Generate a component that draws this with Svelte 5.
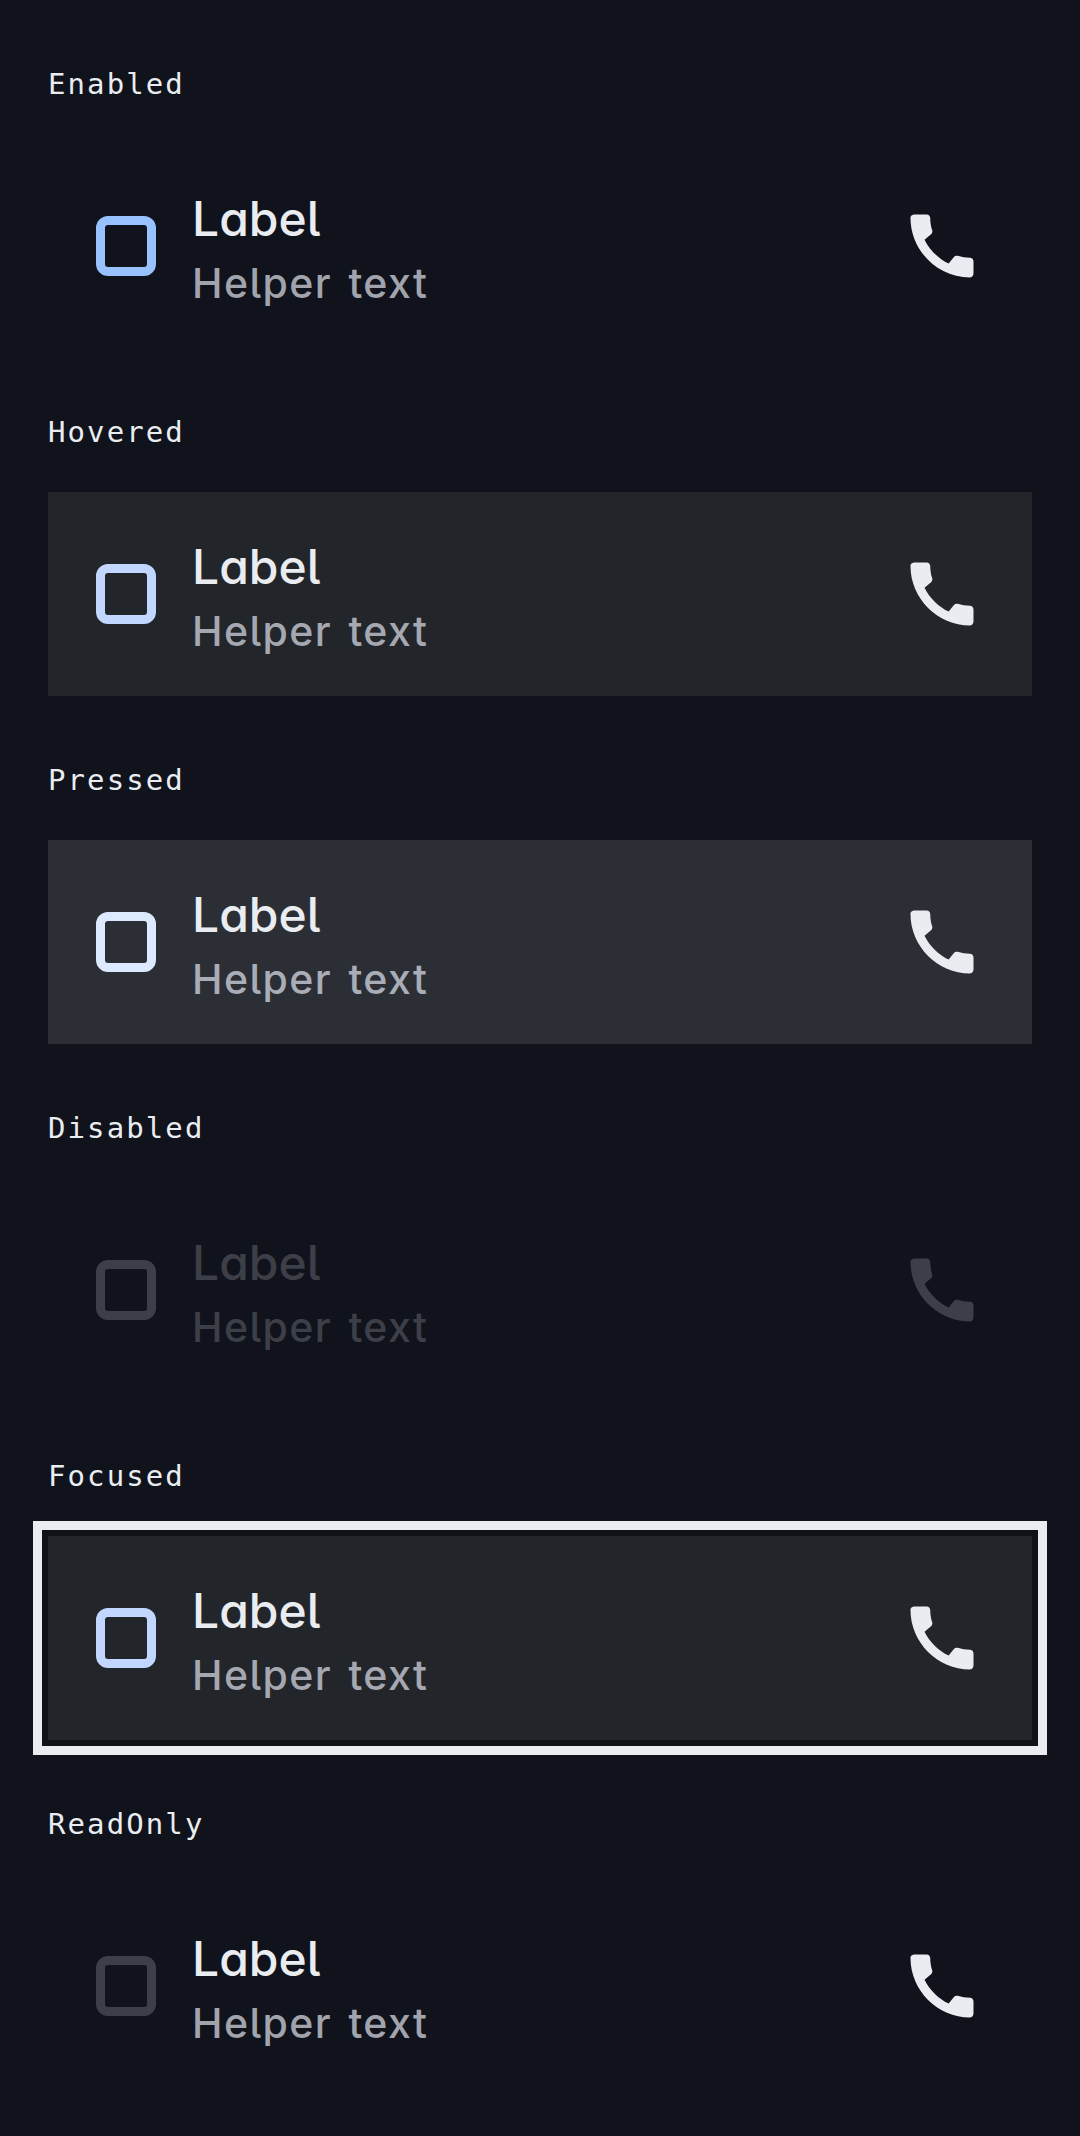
<script>
  const states = ['Enabled', 'Hovered', 'Pressed', 'Disabled', 'Focused', 'ReadOnly'];
</script>

<main>
  {#each states as state}
    <section class={state.toLowerCase()}>
      <h2>{state}</h2>
      <div class="row">
        <span class="box" role="checkbox" aria-checked="false" aria-label={state} tabindex="-1"></span>
        <div class="copy">
          <span class="label">Label</span>
          <span class="helper">Helper text</span>
        </div>
        <svg class="phone" viewBox="0 0 24 24" aria-hidden="true">
          <path d="M20.01 15.38c-1.23 0-2.42-.2-3.53-.56-.35-.12-.74-.03-1.01.24l-1.57 1.97c-2.83-1.35-5.48-3.9-6.89-6.83l1.95-1.66c.27-.28.35-.67.24-1.02-.37-1.11-.56-2.3-.56-3.53 0-.54-.45-.99-.99-.99H4.19C3.65 3 3 3.24 3 3.99 3 13.28 10.73 21 20.01 21c.71 0 .99-.63.99-1.18v-3.45c0-.54-.45-.99-.99-.99z" />
        </svg>
      </div>
    </section>
  {/each}
</main>

<style>
  :global(body) {
    margin: 0;
    background: #10131b;
  }
  main {
    box-sizing: border-box;
    height: 2136px;
    padding: 0 48px;
    overflow: hidden;
    background: #10131b;
  }
  section {
    --bg: transparent;
    --box: #97c1ff;
    --text: #e9ecf1;
    --helper: #a1a3ad;
    height: 348px;
  }
  h2 {
    box-sizing: border-box;
    height: 144px;
    margin: 0;
    padding-top: 64px;
    color: #e9ecf1;
    font: 400 29px/40px 'DejaVu Sans Mono', monospace;
    letter-spacing: 2.1px;
  }
  .row {
    box-sizing: border-box;
    display: flex;
    align-items: center;
    height: 204px;
    padding: 0 48px;
    background: var(--bg);
  }
  .box {
    box-sizing: border-box;
    width: 60px;
    height: 60px;
    border: 9px solid var(--box);
    border-radius: 12px;
  }
  .copy {
    display: flex;
    flex: 1;
    flex-direction: column;
    margin-left: 36px;
    padding-top: 9px;
    font-family: Inter, 'Open Sans', sans-serif;
    font-feature-settings: 'cv11', 'cv05';
    font-weight: 450;
    white-space: nowrap;
  }
  .label {
    color: var(--text);
    font-size: 48px;
    line-height: 65px;
    letter-spacing: 0;
  }
  .helper {
    color: var(--helper);
    font-size: 41px;
    line-height: 64px;
    letter-spacing: 1.4px;
    word-spacing: 4px;
  }
  .phone {
    width: 84px;
    height: 84px;
    fill: var(--text);
  }
  .hovered,
  .focused {
    --bg: #222529;
    --box: #c2d7ff;
    --helper: #a5a7b1;
  }
  .pressed {
    --bg: #2c2e36;
    --box: #dce9ff;
    --helper: #a8adb7;
  }
  .disabled {
    --box: #3d3f48;
    --text: #3d3f48;
    --helper: #3d3f48;
  }
  .readonly {
    --box: #3d3f48;
  }
  .focused .row {
    outline: 9px solid #e9ecf1;
    outline-offset: 6px;
    box-shadow: 0 0 0 6px #0f1217;
  }
</style>
